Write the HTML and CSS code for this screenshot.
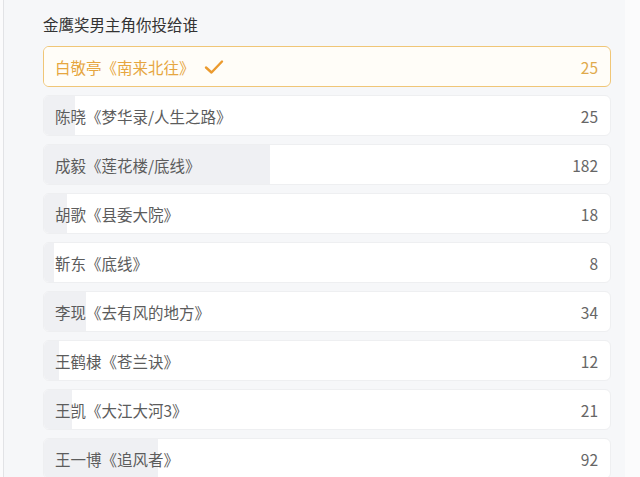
FILE: index.html
```html
<!DOCTYPE html>
<html lang="zh">
<head>
<meta charset="utf-8">
<link rel="stylesheet" href="styles.css">
</head>
<body>
<div class="frame">
  <div class="card">
    <div class="title">金鹰奖男主角你投给谁</div>
    <div class="options">
      <div class="option selected">
        <div class="fill" style="width:5.5%"></div>
        <span class="label">白敬亭《南来北往》<svg class="check" viewBox="0 0 20 16" width="20" height="16"><polyline points="2,8.5 7.5,13.5 18,2.5" fill="none" stroke="#eb9a2e" stroke-width="2.4" stroke-linecap="round" stroke-linejoin="round"/></svg></span>
        <span class="count">25</span>
      </div>
      <div class="option">
        <div class="fill" style="width:5.5%"></div>
        <span class="label">陈晓《梦华录/人生之路》</span>
        <span class="count">25</span>
      </div>
      <div class="option">
        <div class="fill" style="width:39.9%"></div>
        <span class="label">成毅《莲花楼/底线》</span>
        <span class="count">182</span>
      </div>
      <div class="option">
        <div class="fill" style="width:4%"></div>
        <span class="label">胡歌《县委大院》</span>
        <span class="count">18</span>
      </div>
      <div class="option">
        <div class="fill" style="width:1.8%"></div>
        <span class="label">靳东《底线》</span>
        <span class="count">8</span>
      </div>
      <div class="option">
        <div class="fill" style="width:7.5%"></div>
        <span class="label">李现《去有风的地方》</span>
        <span class="count">34</span>
      </div>
      <div class="option">
        <div class="fill" style="width:2.7%"></div>
        <span class="label">王鹤棣《苍兰诀》</span>
        <span class="count">12</span>
      </div>
      <div class="option">
        <div class="fill" style="width:5%"></div>
        <span class="label">王凯《大江大河3》</span>
        <span class="count">21</span>
      </div>
      <div class="option">
        <div class="fill" style="width:20.2%"></div>
        <span class="label">王一博《追风者》</span>
        <span class="count">92</span>
      </div>
    </div>
  </div>
</div>
</body>
</html>
```

FILE: styles.css
```css
* { box-sizing: border-box; }
html, body { margin: 0; padding: 0; }
body {
  background: #fbfbfc;
  font-family: "Noto Sans CJK SC", "Noto Sans", sans-serif;
  width: 640px;
  height: 477px;
  overflow: hidden;
}
.frame {
  margin-left: 3px;
  border-left: 1px solid #e2e3e6;
  height: 477px;
  width: 622px;
}
.card {
  background: #f6f7f9;
  height: 100%;
  padding: 13px 10px 0 39px;
}
.title {
  font-size: 15.5px;
  line-height: 22px;
  color: #333;
  margin-bottom: 11px;
}
.options {
  display: flex;
  flex-direction: column;
  gap: 8px;
  width: 568px;
}
.option {
  position: relative;
  height: 41px;
  background: #fff;
  border: 1px solid #eeeff1;
  border-radius: 6px;
  display: flex;
  align-items: center;
  justify-content: space-between;
  padding: 0 12px 0 11px;
  overflow: hidden;
  font-size: 15.5px;
  color: #5c5c5c;
}
.fill {
  position: absolute;
  left: 0;
  top: 0;
  bottom: 0;
  background: #eff0f3;
}
.label, .count {
  position: relative;
  display: flex;
  align-items: center;
}
.count { color: #666; }
.option.selected {
  border-color: #f0c677;
  background: #fffdf8;
  color: #e6a640;
}
.option.selected .fill { background: #fffdf8; }
.option.selected .count { color: #dfaa4c; }
.check { margin-left: 9px; }
```
